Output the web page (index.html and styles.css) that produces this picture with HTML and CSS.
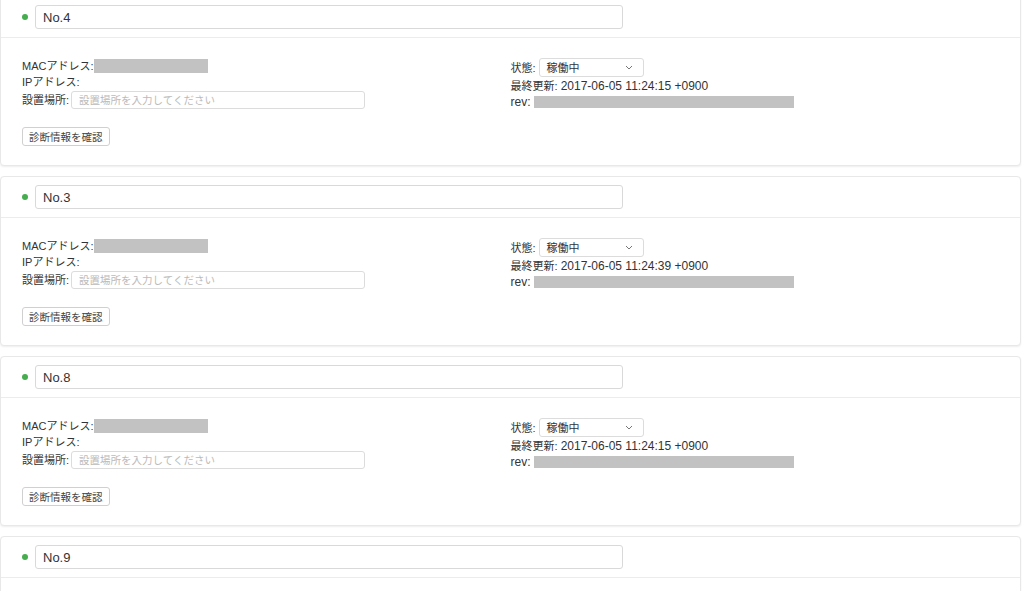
FILE: index.html
```html
<!DOCTYPE html>
<html lang="ja">
<head>
    <meta charset="UTF-8">
    <meta name="viewport" content="width=device-width, initial-scale=1.0">
    <title>デバイス一覧</title>
    <link rel="stylesheet" href="styles.css">
</head>
<body>
    <div class="device-list">
        <div class="device-card">
            <div class="device-head">
                <span class="status-dot"></span>
                <input type="text" class="name-input" value="No.4">
            </div>
            <div class="device-body">
                <div class="col">
                    <div class="row">MACアドレス:<span class="masked mac"></span></div>
                    <div class="row">IPアドレス:</div>
                    <div class="row loc">設置場所:<input type="text" class="loc-input" placeholder="設置場所を入力してください"></div>
                    <button type="button" class="diag-btn">診断情報を確認</button>
                </div>
                <div class="col">
                    <div class="row state">状態: <div class="select-box"><span>稼働中</span><svg width="8" height="5" viewBox="0 0 8 5"><path d="M1 1l3 3 3-3" fill="none" stroke="#777" stroke-width="1"/></svg></div></div>
                    <div class="row">最終更新: <span class="stamp">2017-06-05 11:24:15 +0900</span></div>
                    <div class="row"><span class="stamp">rev:</span> <span class="masked rev"></span></div>
                </div>
            </div>
        </div>

        <div class="device-card">
            <div class="device-head">
                <span class="status-dot"></span>
                <input type="text" class="name-input" value="No.3">
            </div>
            <div class="device-body">
                <div class="col">
                    <div class="row">MACアドレス:<span class="masked mac"></span></div>
                    <div class="row">IPアドレス:</div>
                    <div class="row loc">設置場所:<input type="text" class="loc-input" placeholder="設置場所を入力してください"></div>
                    <button type="button" class="diag-btn">診断情報を確認</button>
                </div>
                <div class="col">
                    <div class="row state">状態: <div class="select-box"><span>稼働中</span><svg width="8" height="5" viewBox="0 0 8 5"><path d="M1 1l3 3 3-3" fill="none" stroke="#777" stroke-width="1"/></svg></div></div>
                    <div class="row">最終更新: <span class="stamp">2017-06-05 11:24:39 +0900</span></div>
                    <div class="row"><span class="stamp">rev:</span> <span class="masked rev"></span></div>
                </div>
            </div>
        </div>

        <div class="device-card">
            <div class="device-head">
                <span class="status-dot"></span>
                <input type="text" class="name-input" value="No.8">
            </div>
            <div class="device-body">
                <div class="col">
                    <div class="row">MACアドレス:<span class="masked mac"></span></div>
                    <div class="row">IPアドレス:</div>
                    <div class="row loc">設置場所:<input type="text" class="loc-input" placeholder="設置場所を入力してください"></div>
                    <button type="button" class="diag-btn">診断情報を確認</button>
                </div>
                <div class="col">
                    <div class="row state">状態: <div class="select-box"><span>稼働中</span><svg width="8" height="5" viewBox="0 0 8 5"><path d="M1 1l3 3 3-3" fill="none" stroke="#777" stroke-width="1"/></svg></div></div>
                    <div class="row">最終更新: <span class="stamp">2017-06-05 11:24:15 +0900</span></div>
                    <div class="row"><span class="stamp">rev:</span> <span class="masked rev"></span></div>
                </div>
            </div>
        </div>

        <div class="device-card">
            <div class="device-head">
                <span class="status-dot"></span>
                <input type="text" class="name-input" value="No.9">
            </div>
            <div class="device-body empty"></div>
        </div>
    </div>
</body>
</html>
```

FILE: styles.css
```css
body, html {
    margin: 0;
    padding: 0;
    background-color: #fff;
    font-family: "Liberation Sans", "Noto Sans CJK JP", sans-serif;
    color: #333;
    overflow: hidden;
}

.device-list {
    margin: -4px 3px 0 0;
}

.device-card {
    border: 1px solid #e8e8e8;
    border-radius: 4px;
    box-shadow: 0 1px 2px rgba(0,0,0,0.07);
    margin-bottom: 10px;
    background-color: #fff;
}

.device-head {
    display: flex;
    align-items: center;
    gap: 7px;
    padding: 8px 21px;
    border-bottom: 1px solid #ececec;
}

.status-dot {
    width: 6px;
    height: 6px;
    border-radius: 50%;
    background-color: #46ad4e;
}

.name-input {
    box-sizing: border-box;
    width: 588px;
    height: 24px;
    padding: 0 7px;
    border: 1px solid #d9d9d9;
    border-radius: 3px;
    font-family: inherit;
    font-size: 13px;
    color: #333;
}

.device-body {
    display: grid;
    grid-template-columns: 1fr 1fr;
    padding: 20px 21px 19px;
    font-size: 11px;
}

.device-body.empty {
    height: 90px;
}

.row {
    line-height: 16px;
    white-space: nowrap;
}

.stamp {
    font-size: 12px;
}

.masked {
    display: inline-block;
    vertical-align: top;
    background-color: #c2c2c2;
}

.masked.mac {
    width: 114px;
    height: 14px;
    margin-top: 1px;
}

.masked.rev {
    width: 260px;
    height: 12px;
    margin-top: 2px;
}

.loc {
    display: flex;
    align-items: center;
    gap: 2px;
    margin-top: 1px;
}

.loc-input {
    box-sizing: border-box;
    width: 294px;
    height: 18px;
    padding: 0 7px;
    border: 1px solid #dcdcdc;
    border-radius: 3px;
    font-family: inherit;
    font-size: 10.5px;
}

.loc-input::placeholder {
    color: #bbb;
}

.diag-btn {
    box-sizing: border-box;
    display: block;
    margin-top: 18px;
    height: 19px;
    padding: 0 6px;
    background-color: #fff;
    border: 1px solid #d0d0d0;
    border-radius: 3px;
    font-family: inherit;
    font-size: 10.5px;
    color: #444;
}

.state {
    display: flex;
    align-items: center;
    gap: 3px;
    margin-bottom: 1px;
}

.select-box {
    box-sizing: border-box;
    display: flex;
    align-items: center;
    justify-content: space-between;
    width: 105px;
    height: 19px;
    padding: 0 10px 0 7px;
    border: 1px solid #dcdcdc;
    border-radius: 3px;
    font-size: 11px;
}
```
